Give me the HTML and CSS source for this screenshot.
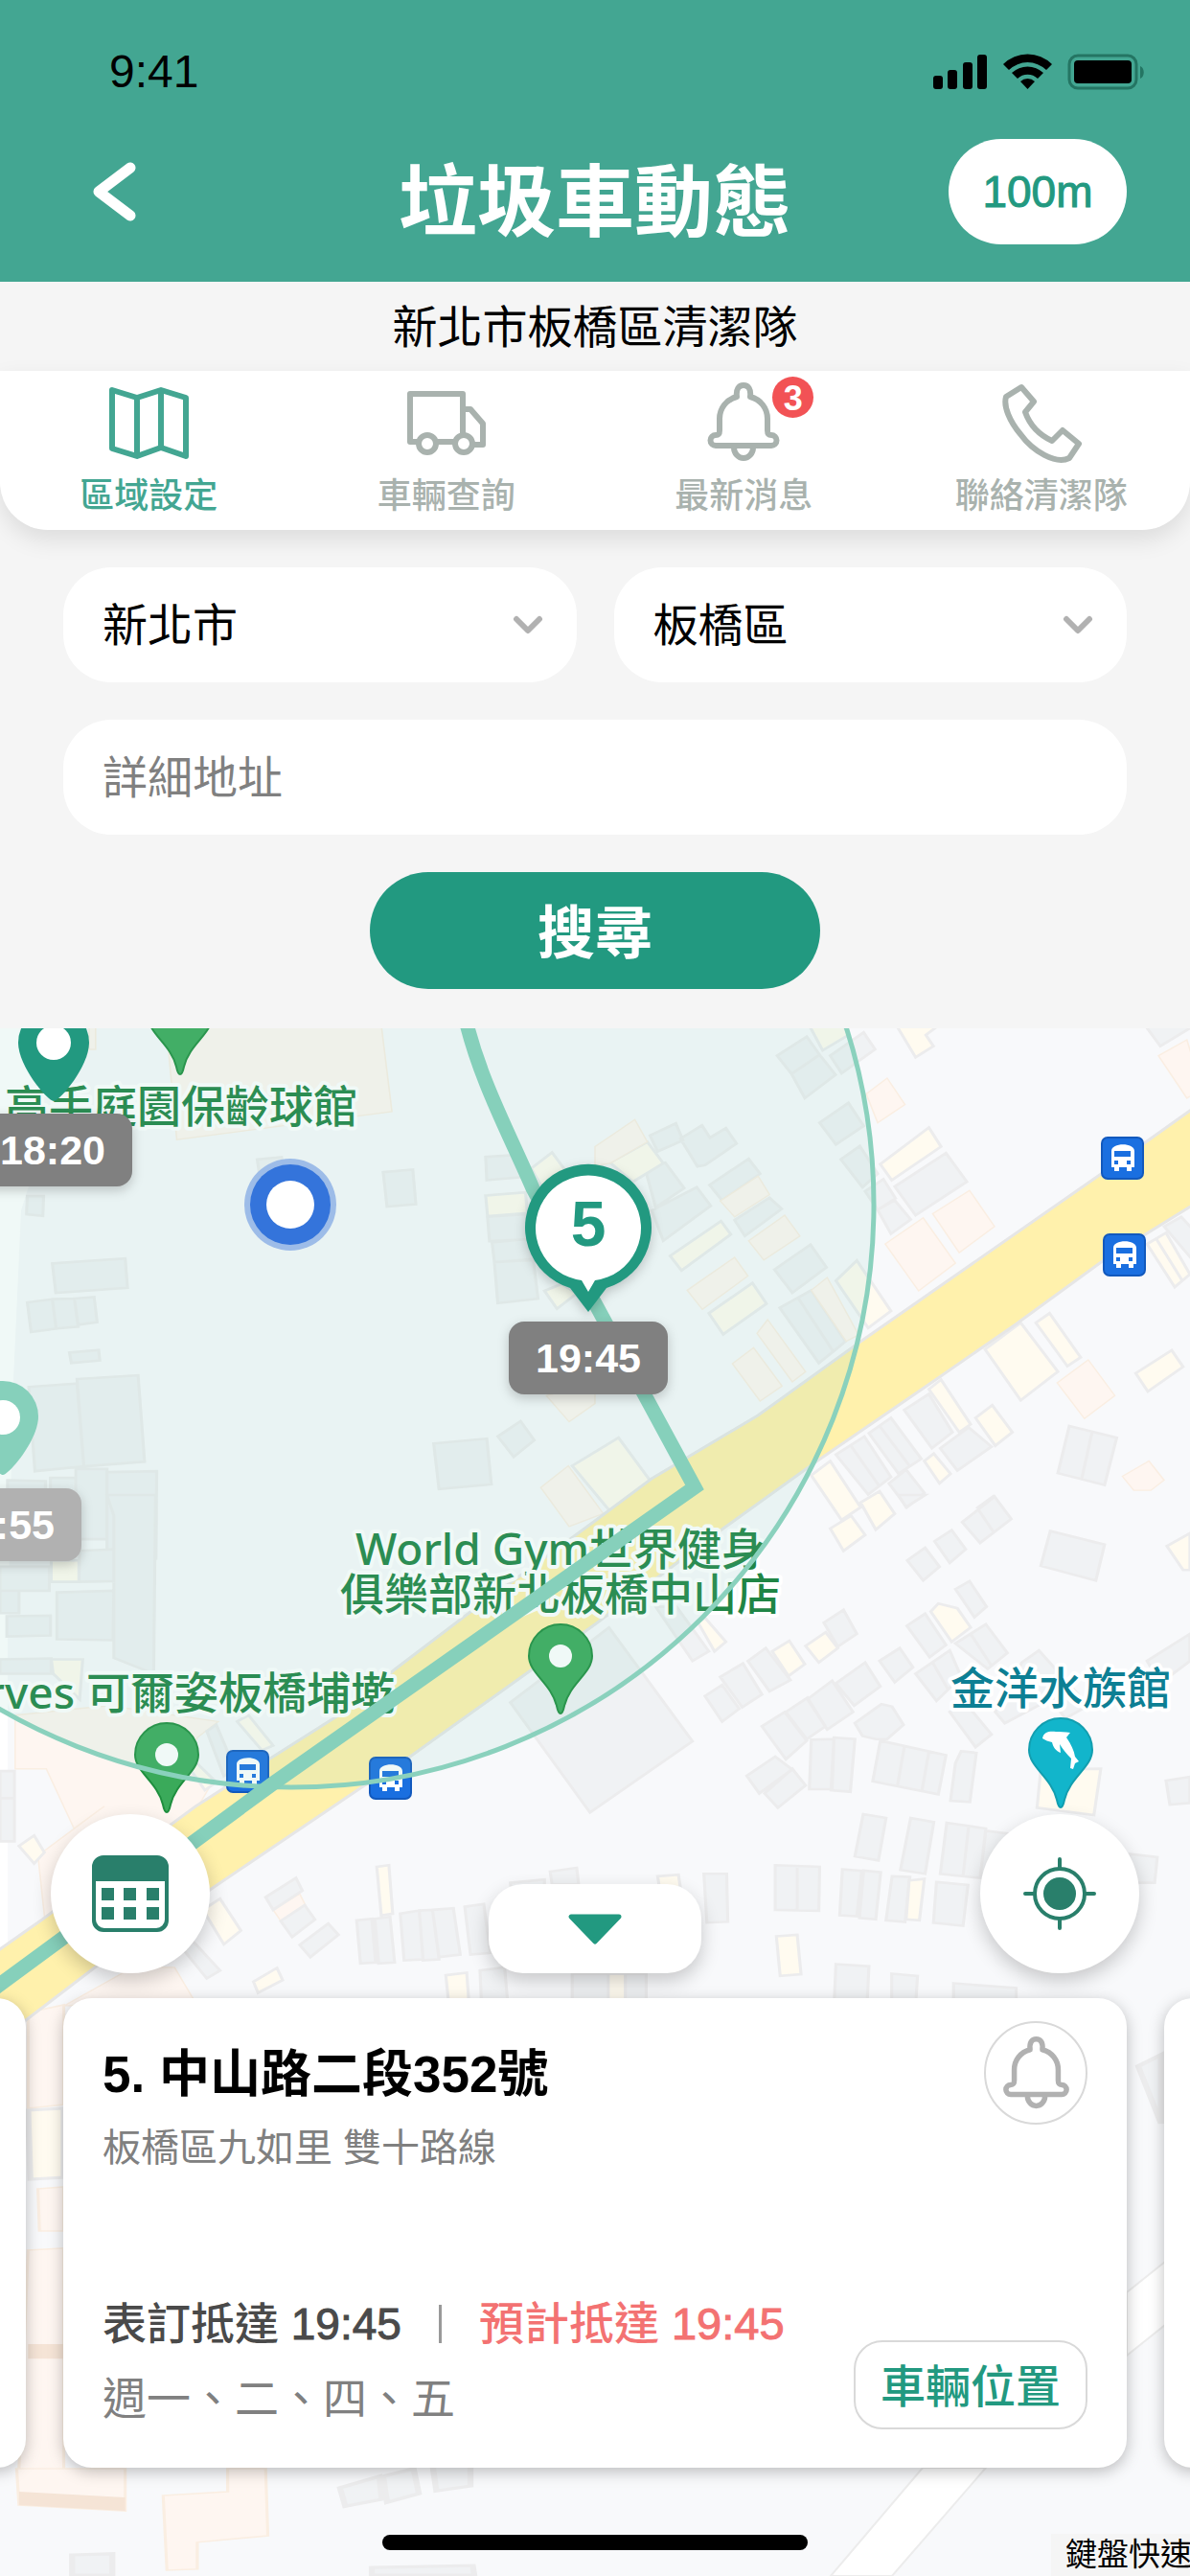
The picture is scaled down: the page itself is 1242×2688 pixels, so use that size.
FILE: index.html
```html
<!DOCTYPE html>
<html lang="zh-Hant">
<head>
  <meta charset="UTF-8" />
  <meta name="viewport" content="width=device-width, initial-scale=1" />
  <title>垃圾車動態</title>
  <link rel="stylesheet" href="styles.css">
</head>
<body>
  <header class="header">
    <div class="status-bar">
      <span>9:41</span>
      <svg class="status-icons" width="222" height="40" viewBox="0 0 222 40" aria-hidden="true">
        <rect x="0" y="24" width="10" height="14" rx="3" />
        <rect x="15" y="18" width="10" height="20" rx="3" />
        <rect x="31" y="10" width="10" height="28" rx="3" />
        <rect x="46" y="2" width="10" height="36" rx="3" />
        <path d="M73 12a36 36 0 0 1 51 0l-6 6a28 28 0 0 0-39 0z" />
        <path d="M82 21a24 24 0 0 1 33 0l-6 6a15 15 0 0 0-21 0z" />
        <path d="M91 30a11 11 0 0 1 15 0l-7.500 8z" />
        <rect class="battery-frame" x="142" y="3" width="70" height="34" rx="9" />
        <rect x="147" y="8" width="60" height="24" rx="4" />
        <path class="battery-cap" d="M216 14c5 2 5 11 0 13z" />
      </svg>
    </div>
    <div class="navbar">
      <button class="back" type="button" aria-label="返回">
        <svg width="48" height="62" viewBox="0 0 48 62"><path d="M40 6L7 31l33 25" /></svg>
      </button>
      <h1>垃圾車動態</h1>
      <button class="range" type="button">100m</button>
    </div>
  </header>

  <div class="team">新北市板橋區清潔隊</div>

  <nav class="tabs">
    <a class="tab active" href="#area">
      <svg class="tab-icon" viewBox="0 0 84 84"><path d="M4 8l26 8 25-8 26 8v61l-26-9-25 9-26-8zM30 16v61M55 8v60" /></svg>
      區域設定
    </a>
    <a class="tab" href="#truck">
      <svg class="tab-icon" viewBox="0 0 84 84"><path d="M13 62H4V12h55v43M31 62h20M60 28h7l13 15v22H70" /><circle cx="22" cy="64" r="9" /><circle cx="60" cy="64" r="9" /></svg>
      車輛查詢
    </a>
    <a class="tab" href="#news">
      <svg class="tab-icon" viewBox="0 0 84 84"><use href="#bell" /></svg>
      最新消息
      <span class="badge">3</span>
    </a>
    <a class="tab" href="#contact">
      <svg class="tab-icon" viewBox="0 0 84 84"><path d="M21 5l13 15-9 11c5 14 15 24 28 30l11-11 17 14-10 15c-14 7-38-7-51-25C9 41 2 25 5 15z" /></svg>
      聯絡清潔隊
    </a>
  </nav>

  <form class="search" onsubmit="return false">
    <div class="selects">
      <div class="select">
        <select aria-label="縣市"><option>新北市</option></select>
        <svg width="32" height="20" viewBox="0 0 32 20"><path d="M4 4l12 12L28 4" /></svg>
      </div>
      <div class="select">
        <select aria-label="行政區"><option>板橋區</option></select>
        <svg width="32" height="20" viewBox="0 0 32 20"><path d="M4 4l12 12L28 4" /></svg>
      </div>
    </div>
    <input type="text" placeholder="詳細地址" aria-label="詳細地址" />
    <button class="submit" type="submit">搜尋</button>
  </form>

  <main class="map">
    <svg class="map-canvas" viewBox="0 1073 1242 1615" preserveAspectRatio="xMidYMin slice">
      <defs>
        <symbol id="bell" viewBox="0 0 84 84">
          <path d="M35 15C34 7 37 3 42 3s8 4 7 12c11 3 18 12 18 23v12c0 4 1 5 4 5a5.500 5.500 0 0 1 0 11H13a5.500 5.500 0 0 1 0-11c3 0 4-1 4-5V38c0-11 7-20 18-23zM32 68a10 11 0 0 0 20 0" />
        </symbol>
        <g id="poi">
          <path d="M0 60c-2 0-3-3-4-8C-10 28-33 18-33 0a33 33 0 0 1 66 0C33 18 10 28 4 52c-1 5-2 8-4 8z" />
        </g>
        <path id="stop" d="M0 61c-6 0-37-36-37-61a37 37 0 0 1 74 0C37 25 6 61 0 61z" />
        <g id="bus">
          <rect width="43" height="43" rx="6" fill="#1a6fe0" stroke="#1259bd" stroke-width="2" />
          <path d="M10 14c0-9 24-9 24 0v17h-3v4h-5v-4h-8v4h-5v-4h-3z" fill="#fff" />
          <path d="M13 14h17v6H13zM13 24h4v4h-4zM26 24h4v4h-4z" fill="#1a6fe0" />
        </g>
      </defs>

      <rect class="land" y="1073" width="1242" height="1615" />
      <path d="M0 1073h40L30 1238 22 1263 14 1440 8 1700V2070H0z" fill="#fff" />
      <path class="lane" d="M867 2688l96-113h66l-98 113z" />
      <path class="lane" d="M1176 2392l40-32v66l-40 32z" />

      <!-- buildings, north west -->
      <g transform="translate(0 1060) scale(.396 .333)">
        <path class="shop" d="M438 30H1005L1033 300 466 388zM235 30h17v75h-17zM1425 1478L1498 1410 1590 1560 1500 1600zM1440 1190L1500 1272 1568 1215V1150z" />
        <path class="house" d="M678 450L742 443 750 500 685 505zM1010 490L1088 482 1096 590 1020 598zM72 565H115L113 627 70 622zM138 776L330 760 336 852 147 868zM72 898L138 888 148 980 82 991zM138 888L196 886 206 974 148 980zM196 886L248 881 256 960 206 968zM183 1055L260 1047 263 1080 188 1088zM76 1163L203 1152 221 1412 92 1427zM203 1138L364 1127 381 1397 221 1412zM1143 1340L1283 1325 1295 1468 1157 1483zM1312 1318L1372 1270 1408 1330 1354 1382zM1280 442L1370 435 1380 505 1283 515zM1285 630L1385 622 1400 700 1290 706zM1297 710L1400 698 1410 765 1303 772zM1303 772L1405 762 1418 886 1312 900zM200 1420H282V1640H200zM282 1430L413 1427 411 1700H282zM20 1455L120 1458V1560H20zM133 1448H200V1560H133z" />
        <path class="home" d="M1280 563L1385 553 1390 618 1285 628zM1400 478L1455 428 1500 500 1440 560zM1435 862L1480 840 1520 870 1468 918z" />
      </g>
      <!-- north east -->
      <g transform="translate(621 1060) scale(.396 .333)">
        <path class="house" d="M480 125L558 65 592 122 518 182zM518 182L592 122 634 185 553 258zM620 125L708 52 738 105 650 180zM145 375L213 337 232 390 165 425zM225 385L282 343 303 382 345 352 373 400 290 468 270 472zM130 470L185 460 235 540 160 600zM592 335L668 273 708 345 635 403zM302 530L405 448 435 495 335 578zM368 640L460 570 492 605 395 690zM150 610L268 537 305 595 180 705zM473 795L568 717 610 788 520 868zM648 450L698 408 745 495 705 537zM487 915L535 883 628 1052 590 1088zM535 883L570 860 660 1020 628 1052zM790 535L925 430 980 520 845 625zM712 550L760 512 792 572 745 608zM745 608L790 578 832 638 780 683zM815 1235L880 1185 942 1305 888 1355zM722 1308L780 1260 860 1388 800 1435zM635 1375L710 1318 780 1445 720 1500zM750 1285L830 1412M675 1348L750 1475M775 1465L820 1422 868 1495 822 1540zM910 1355L985 1290 1045 1350 955 1425zM1250 1285L1375 1322 1343 1470 1220 1433zM1310 1305L1283 1450M1450 30L1490 95 1580 30zM1500 660L1545 630 1600 700V800zM1010 1540L1050 1505 1085 1560z" />
        <path class="home" d="M567 35L600 108 668 60 655 30zM797 35L845 130 892 95 872 60 900 35zM752 465L880 350 912 410 782 515zM40 460L138 395 180 462 100 520zM198 752L332 643 358 685 228 798zM300 932L415 837 452 902 338 998zM635 830L690 767 780 925 720 978zM1028 1045L1122 962 1220 1115 1122 1205zM1162 962L1198 932 1280 1070 1245 1098zM880 1170L912 1140 990 1280 960 1305zM1003 1260L1047 1220 1100 1305 1055 1347zM1425 1120L1520 1048 1550 1100 1457 1177zM1455 715L1505 680 1568 810 1528 850zM1480 700L1548 830M570 1440L620 1395 700 1540 650 1580zM700 1525L750 1490 790 1560 740 1610zM868 1395L893 1372 937 1435 908 1465zM-60 1410L62 1322 157 1475 45 1560z" />
        <path class="shop" d="M0 410L105 325 138 395 40 462 0 470zM330 580L430 502 460 560 368 630zM405 705L500 625 540 690 445 765zM243 860L368 757 403 815 283 920zM570 860L612 820 695 1000 662 1020zM427 995L455 952 555 1115 520 1147zM362 1090L418 1040 493 1160 435 1207zM715 245L770 195 817 278 745 335zM765 715L865 633 950 775 853 862zM890 620L987 547 1053 660 960 742zM1218 1150L1300 1078 1370 1190 1290 1262zM1390 1443L1460 1395 1500 1455 1465 1487H1420zM1485 125L1560 75 1600 230 1560 258z" />
      </g>
      <!-- south west -->
      <g transform="translate(0 1560) scale(.396 .333)">
        <path class="shop" d="M40 690L285 660 575 710 520 760 490 840 560 900 520 980 380 1130 120 1350 100 1130 275 975 195 1045 122 858H40zM720 1300L790 1250 805 1285 740 1335zM170 1600L350 1480H460L520 1600z" />
        <path class="house" d="M282 0H410L405 560 300 510V65zM0 225H130V300H0zM0 300H50V370H0zM150 305L300 300 298 455 150 452zM210 175L300 170V270L208 272zM18 380L133 378V440L18 443zM0 515L135 512V560H0zM1345 650L1605 415 1825 772 1555 995zM545 740L570 720 620 860 590 880zM700 1260L780 1200 797 1240 720 1300zM740 1335L803 1285 830 1330 770 1385zM790 1410L865 1343 892 1378 818 1448zM940 1333L980 1328 990 1465 950 1468zM988 1328L1028 1322 1040 1465 998 1468zM1055 1312L1105 1302 1115 1455 1065 1458zM1105 1302L1140 1300 1157 1455 1115 1458zM1140 1300L1195 1295 1213 1440 1157 1448zM1225 1290L1275 1282 1292 1435 1240 1440zM1345 1215L1435 1205V1250L1350 1260zM1450 1180L1520 1168 1525 1220H1455zM0 865H38V950H0zM0 950H38V1085H0zM1265 1490L1330 1480 1340 1620H1270zM480 1420L510 1400 580 1490 545 1515z" />
        <path class="home" d="M135 205H208V272H135zM135 515H218L210 640 140 560zM50 1100L90 1067 117 1120 90 1155zM535 1300L580 1265 635 1365 590 1408zM668 1525L730 1482 745 1520 680 1560zM993 1165L1025 1160 1035 1312 1005 1318zM1175 1505L1230 1497 1238 1620H1185zM625 710L655 690 720 785 690 800zM490 840L510 830 570 900 540 925z" />
      </g>
      <!-- south east -->
      <g transform="translate(621 1560) scale(.396 .333)">
        <path class="house" d="M160 350H215L300 490 257 520zM330 570L390 528 440 625 388 665zM290 630L335 595 380 670 335 710zM403 520L450 480 515 580 460 615zM603 400L655 360 690 435 640 475zM440 725L500 680 558 770 503 828zM503 680L560 635 607 725 558 765zM560 640L625 582 680 680 612 735zM635 590L712 525 752 600 683 660zM750 520L803 480 838 540 790 587zM685 715L755 655 783 663 813 720 770 765H740L705 755zM822 410L870 372 925 470 882 508zM845 560L935 487 965 570 900 645zM890 525L930 608M950 465L1030 405 1087 495 1035 545zM990 435L1045 535M950 295L987 270 1032 350 1000 383zM823 205L870 165 908 225 865 268zM895 145L940 110 977 170 935 213zM968 85L1053 5 1097 75 1015 150zM1010 45L1050 115M1200 113L1343 155 1320 268 1175 222zM570 767L630 765 625 922H565zM630 760L685 765 673 930 622 925zM752 770L925 815 905 938 732 897zM815 790L797 912M880 805L862 925M965 803L1005 808 988 962 937 958 950 840zM935 680L975 650 1045 750 1003 790zM1125 525L1170 487 1300 660 1240 700 1200 640 1080 715 1055 680zM1455 520L1568 435V520L1490 590zM1505 895L1568 883V965L1515 970zM707 1000L767 1012 747 1145 685 1132zM832 1012L893 1025 870 1187 805 1175zM927 1027L1030 1045 1015 1200 910 1187zM985 1037L970 1193M1030 1052L1095 1062V1200H1015zM1410 1125L1482 1135 1475 1215H1400zM475 1160L592 1165 590 1303 475 1300zM533 1162V1302M287 1187H347L350 1337 295 1340zM652 1173L703 1178 690 1320 645 1317zM708 1177L753 1182 740 1330 697 1325zM783 1195L830 1197 817 1338 767 1333zM900 1213L983 1222 970 1350 892 1340zM447 935L520 858 555 910 482 980zM400 880L475 820 520 860 433 935zM635 1470L722 1477 717 1600H630zM782 1500L850 1507 845 1600H782zM945 1530L1110 1545V1620H945zM800 0H870L820 38zM-60 1500H135V1620H-60z" />
        <path class="home" d="M620 105L675 65 712 125 655 175zM555 473L608 430 640 480 590 525zM467 490L512 457 553 530 510 567zM885 365L905 340 955 355 990 415 940 460zM1507 160L1568 120V235H1550zM1175 860L1333 858 1315 1003 1165 980zM828 1208L868 1203 855 1333 820 1330zM478 1383L533 1378 543 1502 488 1507zM272 400L290 385 345 460 315 490zM165 1195L220 1190 225 1230H170zM35 1500H80V1620H35z" />
      </g>
      <!-- behind and below the cards -->
      <g transform="translate(0 2060) scale(.792 .4)">
        <path class="shop" d="M37 100L84 80V340L37 350zM50 560L84 555V670H52zM37 720L84 715V1290H25zM22 1290H165V1400L25 1385zM215 1360L300 1350V1290H350L353 1465 260 1482V1552L220 1555z" />
        <path class="home" d="M37 355L84 350V530L40 535z" />
        <path d="M25 1350L165 1365V1400L25 1385zM37 965H84V1003H37z" fill="#f5e4d6" />
        <path class="house" d="M448 1340L500 1310 503 1370 455 1388zM505 1310L545 1290 552 1355 510 1378zM570 1280H620V1335L575 1348zM95 1515L148 1512V1568H95zM490 1548L623 1543 625 1568H490zM1500 240L1530 210V390z" />
      </g>

      <path class="road" d="M1260 1146L1152 1223 898 1400 791 1477 680 1543 621 1587 487 1685 412 1742 372 1778 285 1833 204 1885 44 2003-20 2048V2146L27 2108 99 2053 222 1970 376 1866 428 1833 621 1695 752 1597 855 1523 966 1447 1060 1382 1152 1315 1260 1248z" />

      <!-- place names -->
      <g class="place">
        <text x="5" y="1171">高手庭園保齡球館</text>
        <text x="585" y="1633" text-anchor="middle">World Gym世界健身</text>
        <text x="585" y="1680" text-anchor="middle">俱樂部新北板橋中山店</text>
        <text x="412" y="1783" text-anchor="end">Curves 可爾姿板橋埔墘</text>
        <text class="aqua" x="1107" y="1778" text-anchor="middle">金洋水族館</text>
      </g>
      <g fill="#3aaa5a" stroke="#1e8e3e" stroke-width="2">
        <use href="#poi" x="188" y="1061" />
        <use href="#poi" x="585" y="1728" />
        <use href="#poi" x="174" y="1831" />
        <use href="#poi" x="1107" y="1826" fill="#12b5cb" stroke="#129eaf" />
      </g>
      <circle cx="585" cy="1728" r="12" fill="#fff" />
      <circle cx="174" cy="1831" r="12" fill="#fff" />
      <path d="M1088 1814c1-7 8-8 14-7 4 0 10 0 15 1-2 2-3 4-4 5 5 7 8 14 9 20l4 5-4 2-2 6-3-1 1-10c-5-5-9-10-12-15l1 9c-5-2-8-6-9-11-4-1-7-2-10-4z" fill="#fff" />
      <use href="#bus" x="1150" y="1187" />
      <use href="#bus" x="1152" y="1288" />
      <use href="#bus" x="237" y="1827" />
      <use href="#bus" x="386" y="1834" />

      <!-- search radius and truck route -->
      <circle class="radius" cx="304" cy="1257" r="608" />
      <path class="route" d="M485 1060C500 1125 530 1180 556 1240L614 1347 725 1552 285 1861-10 2078" />

      <!-- my position -->
      <circle cx="303" cy="1257" r="48" fill="#9dbce8" />
      <circle cx="303" cy="1257" r="42" fill="#3474db" />
      <circle cx="303" cy="1257" r="25" fill="#fff" />

      <!-- stops -->
      <use href="#stop" x="56" y="1088" fill="#229980" />
      <circle cx="56" cy="1088" r="18" fill="#fff" />
      <use href="#stop" x="3" y="1478" fill="#86d0bb" />
      <circle cx="3" cy="1479" r="18" fill="#fff" />
      <g class="current">
        <path d="M595 1344a66 66 0 1 1 38 0l-19 25z" fill="#229980" />
        <path d="M607 1336a55 55 0 1 1 14 0l-7 12z" fill="#fff" />
        <text x="614" y="1300" text-anchor="middle">5</text>
      </g>
      <g class="chip">
        <rect x="-28" y="1162" width="166" height="76" rx="16" />
        <text x="55" y="1215" text-anchor="middle">18:20</text>
        <rect x="531" y="1379" width="166" height="76" rx="16" />
        <text x="614" y="1432" text-anchor="middle">19:45</text>
        <rect class="past" x="-81" y="1553" width="166" height="76" rx="16" />
        <text x="2" y="1606" text-anchor="middle">18:55</text>
      </g>
    </svg>

    <div class="controls">
      <button class="round" type="button" aria-label="時刻表">
        <svg width="80" height="80" viewBox="0 0 80 80" fill="#297f6b">
          <path fill-rule="evenodd" d="M12 0h56a12 12 0 0 1 12 12v56a12 12 0 0 1-12 12H12A12 12 0 0 1 0 68V12A12 12 0 0 1 12 0zM4 27v40a9 9 0 0 0 9 9h54a9 9 0 0 0 9-9V27z" />
          <path d="M10 34h13v13H10zM33 34h13v13H33zM57 34h13v13H57zM10 54h13v13H10zM33 54h13v13H33zM57 54h13v13H57z" />
        </svg>
      </button>
      <button class="collapse" type="button" aria-label="收合">
        <svg width="58" height="34" viewBox="0 0 58 34"><path d="M4 4h50L29 30z" /></svg>
      </button>
      <button class="round" type="button" aria-label="定位">
        <svg width="78" height="78" viewBox="0 0 78 78" fill="none" stroke="#297f6b" stroke-width="4" stroke-linecap="round">
          <circle cx="39" cy="39" r="26" />
          <circle cx="39" cy="39" r="15" fill="#297f6b" />
          <path d="M39 3v10M39 65v10M3 39h10M65 39h10" />
        </svg>
      </button>
    </div>

    <div class="cards">
      <article class="card"></article>
      <article class="card">
        <div class="card-top">
          <div>
            <h2>5. 中山路二段352號</h2>
            <p class="route-name">板橋區九如里 雙十路線</p>
          </div>
          <button class="notify" type="button" aria-label="到站提醒">
            <svg width="77" height="77" viewBox="0 0 84 84"><use href="#bell" /></svg>
          </button>
        </div>
        <div class="card-bottom">
          <div>
            <p class="times">
              <span>表訂抵達 <span class="time">19:45</span></span>
              <span class="divider"></span>
              <span class="estimate">預計抵達 <span class="time">19:45</span></span>
            </p>
            <p class="days">週一、二、四、五</p>
          </div>
          <button class="locate" type="button">車輛位置</button>
        </div>
      </article>
      <article class="card"></article>
    </div>

    <div class="home-bar"></div>
    <a class="shortcuts" href="#keys">鍵盤快速鍵</a>
  </main>
</body>
</html>
```
FILE: styles.css
```css
* {
  box-sizing: border-box;
}

body {
  margin: 0;
  min-height: 100vh;
  display: flex;
  flex-direction: column;
  font-family: "Liberation Sans", "Noto Sans CJK TC", sans-serif;
  color: #000;
  background-color: #f5f5f5;
  overflow-x: hidden;
}

button,
input,
select {
  font-family: inherit;
  color: inherit;
  border: none;
  padding: 0;
  margin: 0;
}

button {
  cursor: pointer;
}

h1, h2, p {
  margin: 0;
}

svg {
  display: block;
}

/* header */
.header {
  background-color: #43a692;
  padding-bottom: 39px;
}

.status-bar {
  height: 145px;
  padding: 4px 46px 0 114px;
  display: flex;
  align-items: center;
  justify-content: space-between;
  font-size: 48px;
}

.battery-frame {
  fill: none;
  stroke: #247563;
  stroke-width: 3;
}

.battery-cap {
  fill: #247563;
}

.navbar {
  display: grid;
  grid-template-columns: 1fr auto 1fr;
  align-items: center;
  height: 110px;
  padding: 0 66px 0 96px;
}

.navbar h1 {
  font-size: 82px;
  line-height: 86px;
  font-weight: bold;
  color: #fff;
  padding-top: 24px;
  margin-left: -30px;
}

.back {
  justify-self: start;
  background: none;
}

.back path {
  fill: none;
  stroke: #fff;
  stroke-width: 11;
  stroke-linecap: round;
  stroke-linejoin: round;
}

.range {
  justify-self: end;
  width: 186px;
  height: 110px;
  border-radius: 55px;
  background-color: #fff;
  color: #229980;
  font-size: 46px;
  -webkit-text-stroke: 1px #229980;
}

.team {
  height: 93px;
  padding-top: 2px;
  line-height: 91px;
  text-align: center;
  font-size: 47px;
}

/* tabs */
.tabs {
  display: grid;
  grid-template-columns: repeat(4, 1fr);
  height: 166px;
  padding-top: 12px;
  background-color: #fff;
  border-radius: 0 0 50px 50px;
  box-shadow: 0 10px 24px rgba(0, 0, 0, 0.1);
}

.tab {
  position: relative;
  display: flex;
  flex-direction: column;
  align-items: center;
  font-size: 36px;
  line-height: 70px;
  font-weight: 500;
  color: #a9b2ae;
  text-decoration: none;
}

.tab.active {
  color: #43a692;
}

.tab-icon {
  width: 84px;
  height: 84px;
  fill: none;
  stroke: currentColor;
  stroke-width: 6;
  stroke-linejoin: round;
}

.badge {
  position: absolute;
  top: -6px;
  left: calc(50% + 30px);
  width: 43px;
  height: 43px;
  border-radius: 50%;
  background-color: #f25255;
  color: #fff;
  font-size: 36px;
  font-weight: bold;
  line-height: 45px;
  text-align: center;
}

/* search form */
.search {
  display: flex;
  flex-direction: column;
  gap: 39px;
  padding: 39px 66px 41px;
}

.selects {
  display: flex;
  gap: 39px;
}

.select {
  position: relative;
  flex: 1;
}

.select select,
.search input {
  appearance: none;
  display: block;
  width: 100%;
  height: 120px;
  padding: 0 41px;
  border-radius: 50px;
  background-color: #fff;
  font-size: 47px;
}

.select svg {
  position: absolute;
  right: 35px;
  top: 50px;
  fill: none;
  stroke: #b1b1b1;
  stroke-width: 6;
  stroke-linecap: round;
  stroke-linejoin: round;
  pointer-events: none;
}

.search input::placeholder {
  color: #808080;
  opacity: 1;
}

.submit {
  align-self: center;
  width: 470px;
  height: 122px;
  padding-bottom: 6px;
  border-radius: 61px;
  background-color: #229980;
  color: #fff;
  font-size: 60px;
  font-weight: bold;
}

/* map */
.map {
  position: relative;
  flex: 1;
  display: flex;
  flex-direction: column;
  justify-content: flex-end;
  min-height: 1200px;
  padding-bottom: 27px;
  overflow: hidden;
}

.map-canvas {
  position: absolute;
  top: 0;
  left: 0;
  width: 100%;
  height: 100%;
}

.land {
  fill: #f8f9fb;
}

.house {
  fill: #f0f2f4;
}

.home {
  fill: #fffbf0;
}

.shop {
  fill: #fef6f1;
  stroke: #faeee2;
}

.house,
.home {
  stroke: #ececed;
  stroke-width: 8;
}

.shop {
  stroke-width: 4;
}

.lane {
  fill: #fff;
  stroke: #ececec;
  stroke-width: 2;
}

.road {
  fill: #fff1ac;
  stroke: #e6e6e6;
  stroke-width: 3;
}

.radius {
  fill: rgba(134, 208, 187, 0.12);
  stroke: #8ad1bd;
  stroke-width: 5;
}

.route {
  fill: none;
  stroke: #86d0bb;
  stroke-width: 15;
}

.place text {
  font-family: "Noto Sans", "Noto Sans CJK TC", sans-serif;
  font-size: 46px;
  font-weight: 500;
  fill: #1f8545;
  stroke: #fff;
  stroke-width: 8px;
  stroke-linejoin: round;
  paint-order: stroke;
}

.place .aqua {
  fill: #0d7f94;
}

.current {
  filter: drop-shadow(0 4px 6px rgba(0, 0, 0, 0.2));
}

.current text {
  font-size: 66px;
  font-weight: bold;
  fill: #229980;
}

.chip rect {
  fill: #808080;
  filter: drop-shadow(0 4px 6px rgba(0, 0, 0, 0.2));
}

.chip .past {
  fill: #b1b1b1;
}

.chip text {
  font-size: 43px;
  font-weight: bold;
  fill: #fff;
}

/* map controls */
.controls {
  position: relative;
  display: flex;
  align-items: flex-end;
  justify-content: space-between;
  padding: 0 53px;
  margin-bottom: 26px;
}

.controls button {
  display: flex;
  align-items: center;
  justify-content: center;
  background-color: #fff;
  box-shadow: 0 8px 20px rgba(0, 0, 0, 0.2);
}

.round {
  width: 166px;
  height: 166px;
  border-radius: 50%;
}

.collapse {
  width: 222px;
  height: 93px;
  border-radius: 36px;
}

.collapse path {
  fill: #229980;
  stroke: #229980;
  stroke-width: 5;
  stroke-linejoin: round;
}

/* stop cards */
.cards {
  position: relative;
  display: flex;
  justify-content: center;
  gap: 39px;
}

.card {
  flex: 0 0 calc(100% - 132px);
  height: 490px;
  display: flex;
  flex-direction: column;
  justify-content: space-between;
  padding: 24px 41px 40px;
  border-radius: 30px;
  background-color: #fff;
  box-shadow: 0 4px 16px rgba(0, 0, 0, 0.25);
}

.card-top,
.card-bottom {
  display: flex;
  justify-content: space-between;
  align-items: flex-start;
}

.card-bottom {
  align-items: flex-end;
}

.card h2 {
  margin-top: 20px;
  font-size: 53px;
  line-height: 72px;
}

.route-name {
  font-size: 40px;
  line-height: 80px;
  color: #808080;
}

.notify {
  display: flex;
  align-items: center;
  justify-content: center;
  width: 108px;
  height: 108px;
  border: 2px solid #d9d9d9;
  border-radius: 50%;
  background-color: #fff;
}

.notify svg {
  fill: none;
  stroke: #b1b1b1;
  stroke-width: 6;
  stroke-linejoin: round;
}

.times {
  display: flex;
  align-items: center;
  font-size: 46px;
  line-height: 80px;
  font-weight: 500;
  color: #4a4a4a;
}

.time {
  -webkit-text-stroke: 1px currentColor;
}

.divider {
  width: 3px;
  height: 40px;
  margin: 0 39px;
  background-color: #999;
}

.estimate {
  font-size: 47px;
  color: #f37272;
}

.days {
  font-size: 46px;
  line-height: 72px;
  padding-top: 2px;
  margin-bottom: -4px;
  color: #808080;
}

.locate {
  width: 244px;
  height: 93px;
  padding-bottom: 4px;
  border: 2px solid #d9d9d9;
  border-radius: 30px;
  background-color: #fff;
  color: #229980;
  font-size: 47px;
  font-weight: 500;
}

.home-bar {
  position: relative;
  align-self: center;
  width: 444px;
  height: 16px;
  margin-top: 70px;
  border-radius: 8px;
  background-color: #000;
}

.shortcuts {
  position: absolute;
  right: -35px;
  bottom: 0;
  padding-left: 15px;
  background-color: #f5f5f5;
  color: #000;
  font-size: 33px;
  line-height: 44px;
  text-decoration: none;
}
```
